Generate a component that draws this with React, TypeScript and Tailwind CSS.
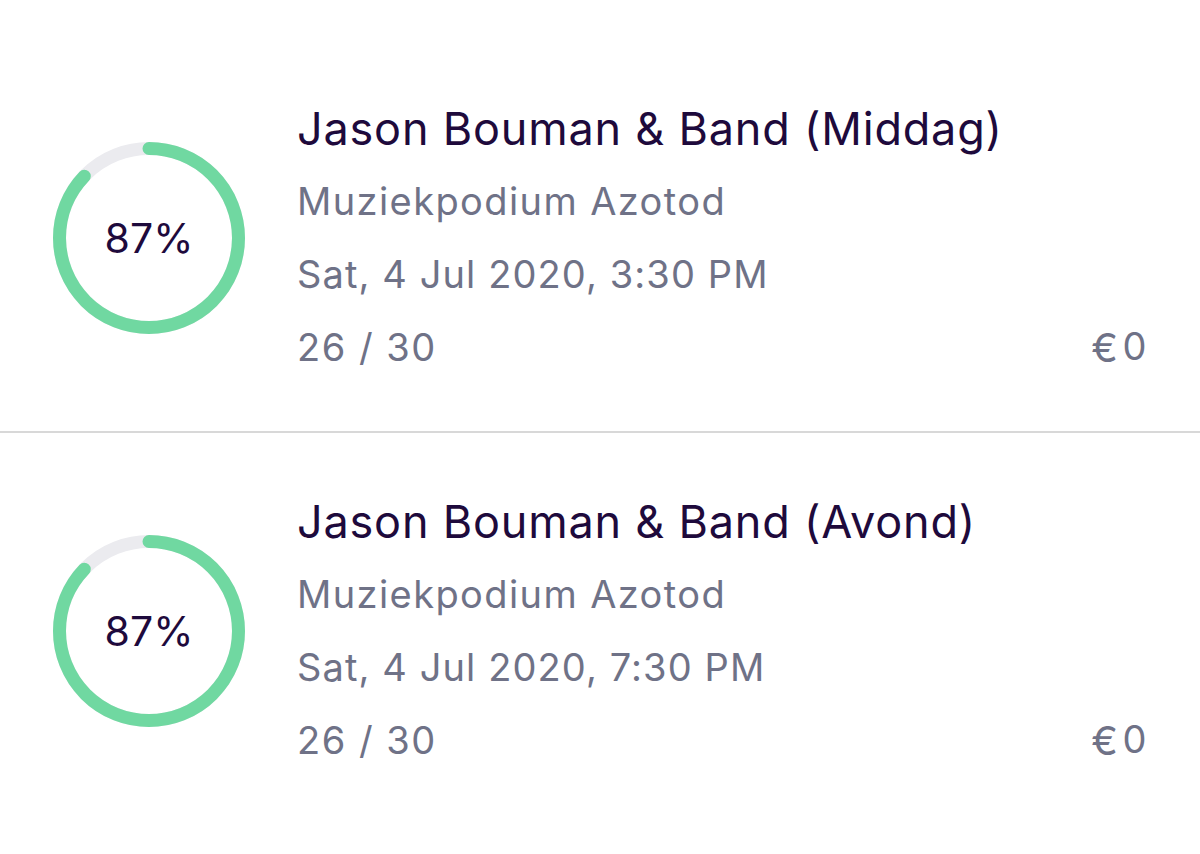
import React from "react";

function Ring({ pct }: { pct: number }) {
  const r = 89.5;
  const c = 2 * Math.PI * r;
  return (
    <div className="relative w-[196px] h-[196px] shrink-0">
      <svg width="196" height="196" viewBox="0 0 196 196" className="absolute inset-0">
        <circle cx="98" cy="98" r={r} fill="none" stroke="#ebebef" strokeWidth="13" />
        <circle
          cx="98"
          cy="98"
          r={r}
          fill="none"
          stroke="#70d8a1"
          strokeWidth="13"
          strokeLinecap="round"
          strokeDasharray={`${(c * pct) / 100} ${c}`}
          transform="rotate(-90 98 98)"
        />
      </svg>
      <div className="absolute inset-0 flex items-center justify-center pt-[2px] text-[41px] text-[#1e0a3c]">
        {pct}%
      </div>
    </div>
  );
}

function Item({ title, time, top, bottom }: { title: string; time: string; top: string; bottom: string }) {
  return (
    <div className={`flex items-center gap-[50px] pl-[51px] pr-[52px] ${top} ${bottom}`}>
      <Ring pct={87} />
      <div className="flex-1 flex flex-col">
        <div className="h-[73px] flex items-center text-[45px] tracking-[0.8px] text-[#1e0a3c] whitespace-nowrap">{title}</div>
        <div className="h-[73px] flex items-center text-[38px] tracking-[1.4px] text-[#6f7287] whitespace-nowrap">Muziekpodium Azotod</div>
        <div className="h-[73px] flex items-center text-[38px] tracking-[1.1px] text-[#6f7287] whitespace-nowrap">{time}</div>
        <div className="h-[73px] flex items-center justify-between text-[38px] tracking-[1.5px] text-[#6f7287] whitespace-nowrap">
          <span>26 / 30</span>
          <span className="flex gap-[3px]">
            <span className="text-[40px]">€</span>
            <span>0</span>
          </span>
        </div>
      </div>
    </div>
  );
}

export default function App() {
  return (
    <div className="w-[1200px] h-[854px] bg-white overflow-hidden" style={{ fontFamily: "Inter, 'Noto Sans', sans-serif" }}>
      <Item title="Jason Bouman & Band (Middag)" time="Sat, 4 Jul 2020, 3:30 PM" top="pt-[92px]" bottom="pb-[47px]" />
      <div className="h-[2px] bg-[#d8d8d8]" />
      <Item title="Jason Bouman & Band (Avond)" time="Sat, 4 Jul 2020, 7:30 PM" top="pt-[52px]" bottom="pb-[40px]" />
    </div>
  );
}
